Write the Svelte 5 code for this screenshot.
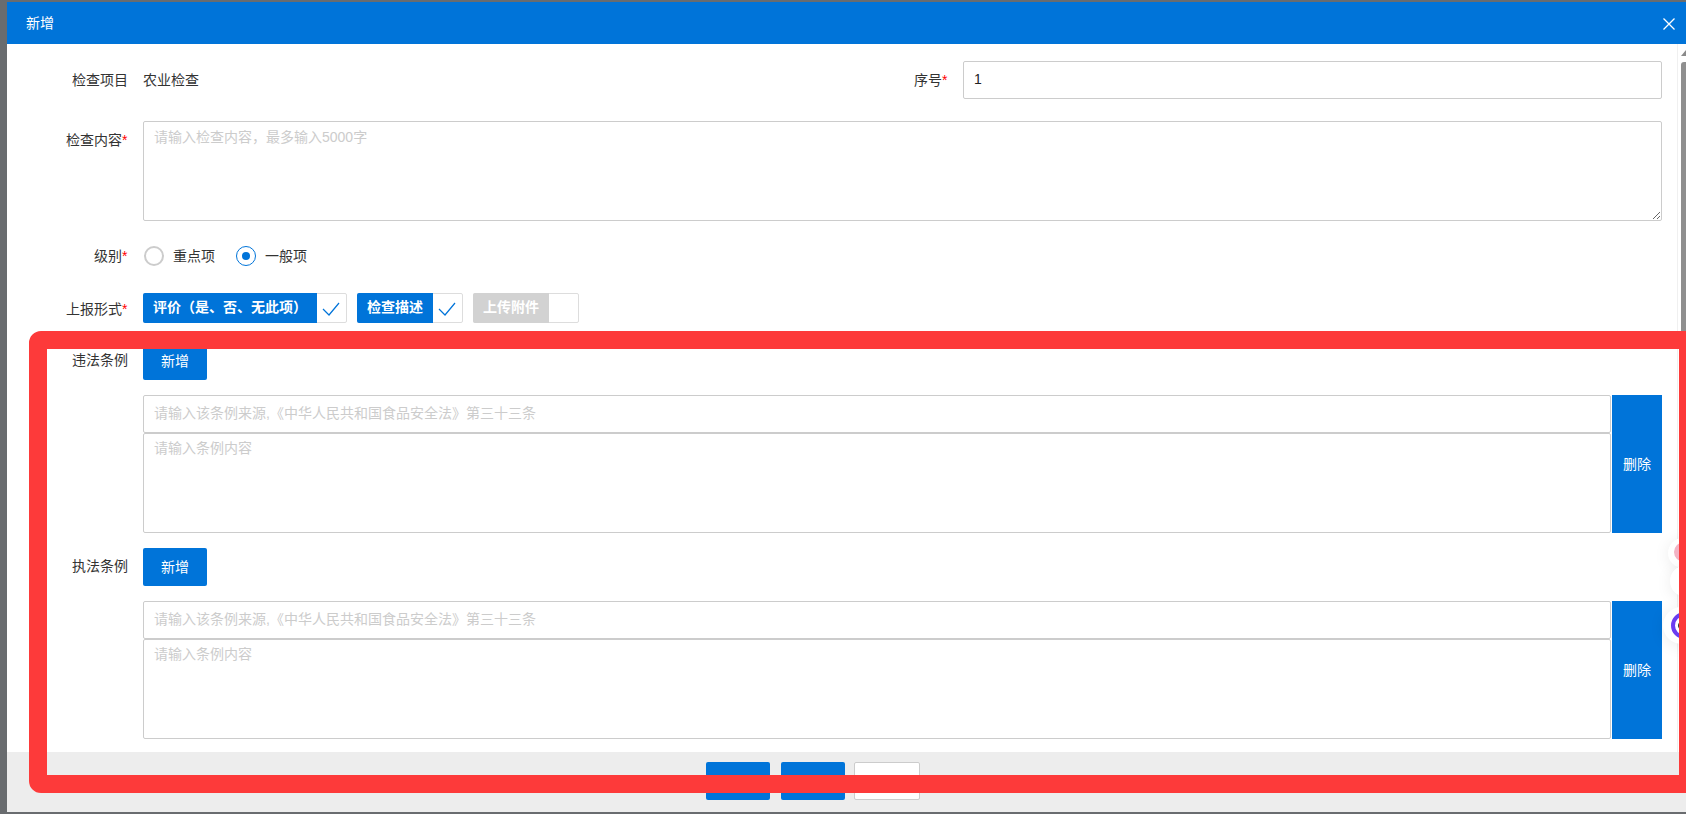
<script>
  const rules = [
    { label: "违法条例", first: true },
    { label: "执法条例", first: false }
  ];
</script>

<div class="backdrop">
  <div class="modal">
    <header class="head">
      <span>新增</span>
      <svg class="close" width="12" height="12" viewBox="0 0 12 12"><path d="M.5.5l11 11M11.5.5l-11 11" stroke="#fff" stroke-width="1.3" fill="none" /></svg>
    </header>

    <div class="body">
      <div class="form">
        <div class="row top">
          <div class="half">
            <label class="lab">检查项目</label>
            <span class="value">农业检查</span>
          </div>
          <div class="half right">
            <label class="lab wide">序号<i>*</i></label>
            <input class="field" value="1" />
          </div>
        </div>

        <div class="row content">
          <label class="lab pad">检查内容<i>*</i></label>
          <textarea class="field area" placeholder="请输入检查内容，最多输入5000字"></textarea>
        </div>

        <div class="row level">
          <label class="lab">级别<i>*</i></label>
          <span class="radio"></span><span class="opt">重点项</span>
          <span class="radio on"></span><span class="opt">一般项</span>
        </div>

        <div class="row report">
          <label class="lab">上报形式<i>*</i></label>
          <div class="check"><b class="w1">评价（是、否、无此项）</b><em><svg width="20" height="16" viewBox="0 0 20 16"><path d="M2 8l6 6L18 2" stroke="#0074d9" stroke-width="1.2" fill="none" /></svg></em></div>
          <div class="check"><b>检查描述</b><em><svg width="20" height="16" viewBox="0 0 20 16"><path d="M2 8l6 6L18 2" stroke="#0074d9" stroke-width="1.2" fill="none" /></svg></em></div>
          <div class="check off"><b>上传附件</b><em></em></div>
        </div>

        {#each rules as rule}
          <div class="row add" class:first={rule.first}>
            <label class="lab">{rule.label}</label>
            <button class="btn">新增</button>
          </div>
          <div class="row item">
            <div class="stack">
              <input class="field" placeholder="请输入该条例来源,《中华人民共和国食品安全法》第三十三条" />
              <textarea class="field area2" placeholder="请输入条例内容"></textarea>
            </div>
            <button class="del">删除</button>
          </div>
        {/each}
      </div>

      <div class="bar">
        <span class="arrow"></span>
        <span class="thumb"></span>
      </div>
    </div>

    <footer class="foot">
      <button class="btn">提交</button>
      <button class="btn gap">保存</button>
      <button class="btn ghost">取消</button>
    </footer>
  </div>

  <div class="float f1"><span></span></div>
  <div class="float f2"></div>
  <div class="float f3"><span></span><s></s></div>
  <div class="mark"></div>
</div>

<style>
  :global(body) {
    margin: 0;
    overflow: hidden;
  }
  .backdrop {
    position: relative;
    height: 814px;
    width: 1686px;
    overflow: hidden;
    padding: 2px 0 2px 7px;
    box-sizing: border-box;
    background: #696c6f;
    font: 14px "Liberation Sans", "Noto Sans CJK SC", sans-serif;
    color: #333;
  }
  .modal {
    height: 810px;
    display: flex;
    flex-direction: column;
    background: #fff;
  }
  .head {
    height: 42px;
    box-sizing: border-box;
    flex: none;
    background: #0074d9;
    color: #fff;
    display: flex;
    align-items: center;
    justify-content: space-between;
    padding: 0 11px 2px 19px;
  }
  .close {
    margin-top: 4px;
  }
  .body {
    flex: 1;
    display: flex;
    min-height: 0;
  }
  .form {
    width: 1655px;
    flex: none;
    padding-top: 17px;
    box-sizing: border-box;
  }
  .row {
    display: flex;
  }
  .lab {
    width: 121px;
    margin-right: 15px;
    padding-bottom: 2px;
    flex: none;
    text-align: right;
    color: #333;
  }
  .lab i {
    color: #f00;
    font-style: normal;
    display: inline-block;
    width: 6px;
    text-align: left;
  }
  .top {
    height: 38px;
    align-items: center;
  }
  .half {
    display: flex;
    align-items: center;
    width: 821px;
  }
  .half.right {
    flex: 1;
  }
  .lab.wide {
    width: 120px;
    margin: 0 15px 0 0;
  }
  .value {
    color: #333;
    padding-bottom: 2px;
  }
  .field {
    flex: 1;
    display: block;
    box-sizing: border-box;
    width: 100%;
    height: 38px;
    border: 1px solid #ccc;
    border-radius: 2px;
    padding: 0 10px 2px;
    font: inherit;
    color: #222;
    background: #fff;
    outline: none;
  }
  .field::placeholder {
    color: #ccc;
  }
  .content {
    margin-top: 22px;
  }
  .lab.pad {
    padding-top: 8px;
  }
  .area {
    height: 100px;
    padding: 5px 10px;
    line-height: 20px;
  }
  .level {
    margin-top: 25px;
    height: 20px;
    align-items: center;
  }
  .radio {
    width: 20px;
    height: 20px;
    border: 2px solid #ccc;
    border-radius: 50%;
    box-sizing: border-box;
    margin-left: 1px;
    flex: none;
    position: relative;
  }
  .radio.on {
    border: 1px solid #0074d9;
    margin-left: 21px;
  }
  .radio.on::after {
    content: "";
    position: absolute;
    inset: 5px;
    border-radius: 50%;
    background: #0074d9;
  }
  .opt {
    margin-left: 9px;
    padding-bottom: 2px;
    color: #333;
  }
  .report {
    margin-top: 27px;
    height: 30px;
    align-items: center;
  }
  .report .lab {
    padding-bottom: 1px;
  }
  .check {
    display: flex;
    height: 30px;
    margin-right: 10px;
    box-sizing: border-box;
    border: 1px solid #ddd;
    border-radius: 2px;
  }
  .check b {
    margin: -1px 0 -1px -1px;
    width: 76px;
    box-sizing: border-box;
    padding-left: 10px;
    line-height: 28px;
    color: #fff;
    font-weight: 700;
    background: #0074d9;
    border-radius: 2px 0 0 2px;
  }
  .check b.w1 {
    width: 174px;
  }
  .check em {
    width: 29px;
    box-sizing: border-box;
    display: flex;
    align-items: center;
    justify-content: center;
    padding: 1px 2px 0 0;
  }
  .check.off b {
    background: #d2d2d2;
  }
  .add {
    height: 38px;
    align-items: center;
  }
  .add.first {
    margin-top: 19px;
  }
  .add .lab {
    padding-bottom: 4px;
  }
  .btn {
    width: 64px;
    height: 38px;
    border: 0;
    border-radius: 2px;
    background: #0074d9;
    color: #fff;
    font: inherit;
    padding: 0 0 2px;
  }
  .item {
    margin: 15px 0 15px 136px;
  }
  .stack {
    flex: 1;
    display: flex;
    flex-direction: column;
  }
  .stack .field {
    flex: none;
  }
  .area2 {
    height: 100px;
    padding: 4px 10px;
    line-height: 20px;
    resize: none;
  }
  .del {
    width: 50px;
    margin-left: 1px;
    border: 0;
    background: #0074d9;
    color: #fff;
    font: inherit;
    padding: 0 0 2px;
    flex: none;
  }
  .bar {
    flex: 1;
    background: #fff;
    border-left: 1px solid #f0f0f0;
    margin-left: 15px;
    padding: 6px 0 0 3px;
    display: flex;
    flex-direction: column;
  }
  .arrow {
    width: 0;
    height: 0;
    border: 5px solid transparent;
    border-top: 0;
    border-bottom: 6px solid #8a8a8a;
  }
  .thumb {
    margin-top: 6px;
    flex: 1;
    background: #8f8f8f;
    border-radius: 3px 0 0 3px;
  }
  .foot {
    height: 60px;
    flex: none;
    background: #ededed;
    box-sizing: border-box;
    padding: 10px 0 0 699px;
    display: flex;
  }
  .foot .btn {
    padding-bottom: 0;
  }
  .gap {
    margin: 0 9px 0 11px;
  }
  .foot .ghost {
    width: 66px;
    background: #fff;
    color: #333;
    border: 1px solid #ccc;
    padding: 2px 0 0;
  }
  .float {
    position: absolute;
    border-radius: 50%;
    background: #fff;
    box-shadow: 0 2px 16px rgba(0, 0, 0, 0.08);
  }
  .f1 {
    left: 1668px;
    top: 538px;
    width: 30px;
    height: 30px;
  }
  .f1 span {
    position: absolute;
    left: 6px;
    top: 4px;
    width: 20px;
    height: 20px;
    border-radius: 50%;
    background: #f3b3c4;
    filter: blur(0.6px);
  }
  .f2 {
    left: 1670px;
    top: 565px;
    width: 32px;
    height: 32px;
  }
  .f3 {
    left: 1663px;
    top: 607px;
    width: 37px;
    height: 37px;
  }
  .f3 span {
    position: absolute;
    left: 8px;
    top: 5px;
    width: 27px;
    height: 27px;
    box-sizing: border-box;
    border: 4px solid #6b3df0;
    border-radius: 50%;
  }
  .f3 s {
    position: absolute;
    left: 15px;
    top: 15px;
    width: 7px;
    height: 7px;
    border-radius: 50%;
    background: #333;
  }
  .mark {
    position: absolute;
    left: 29px;
    top: 331px;
    width: 1668px;
    height: 462px;
    box-sizing: border-box;
    border: 18px solid #fd3a3a;
    border-radius: 12px;
  }
</style>
